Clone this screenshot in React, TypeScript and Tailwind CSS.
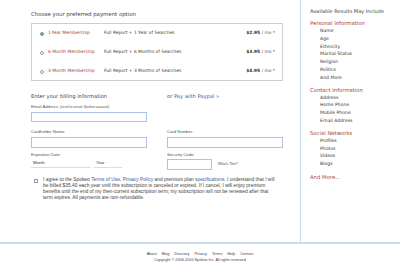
export default function App() {
  const plans = [
    { name: '1-Year Membership', desc: 'Full Report + 1 Year of Searches', price: '$2.95', selected: true },
    { name: '6-Month Membership', desc: 'Full Report + 6 Months of Searches', price: '$3.95', selected: false },
    { name: '3-Month Membership', desc: 'Full Report + 3 Months of Searches', price: '$4.95', selected: false },
  ]

  const sections = [
    { title: 'Personal Information', items: ['Name', 'Age', 'Ethnicity', 'Marital Status', 'Religion', 'Politics', 'And More'] },
    { title: 'Contact Information', items: ['Address', 'Home Phone', 'Mobile Phone', 'Email Address'] },
    { title: 'Social Networks', items: ['Profiles', 'Photos', 'Videos', 'Blogs'] },
  ]

  return (
    <div className="w-[400px] h-[268px] bg-white text-[#333] overflow-hidden" style={{ fontFamily: '"DejaVu Sans", Verdana, sans-serif' }}>
      <div className="flex h-[242px]">
        {/* Main column */}
        <div className="w-[252px] ml-[31px] pt-[10px]">
          <div className="text-[5.4px] leading-[8px] text-[#444]">Choose your preferred payment option</div>

          <div className="mt-[5px] h-[58px] border border-[#cfcfcf]">
            {plans.map((p) => (
              <div key={p.name} className="h-[19px] flex items-center text-[4.4px]">
                <span
                  className={`ml-[8px] w-[4px] h-[4px] rounded-full border-[0.6px] ${p.selected ? 'bg-[#7fb98a] border-[#6a9c78]' : 'bg-white border-[#8a9bb5]'}`}
                />
                <span className="ml-[4px] w-[56px] text-[#b0443a]">{p.name}</span>
                <span className="text-[#444]">{p.desc}</span>
                <span className="ml-auto mr-[7px] text-[#555]">
                  <b className="text-[#333]">{p.price}</b> / mo *
                </span>
              </div>
            ))}
          </div>

          <div className="mt-[11px] flex text-[5.2px] leading-[8px] text-[#444]">
            <span className="w-[136px]">Enter your billing information</span>
            <span>
              or <span className="text-[#3b5ea8]">Pay with Paypal »</span>
            </span>
          </div>

          <div className="text-[4.2px] text-[#555]" style={{ fontFamily: '"Liberation Sans", Arial, sans-serif' }}>
            <div className="mt-[4px] leading-[6px]">
              Email Address: <i className="text-[3.4px]">(used to create Spokeo account)</i>
            </div>
            <div className="mt-[2px] w-[116px] h-[10px] border border-[#a9c4e4]" />

            <div className="mt-[7px] flex gap-[20px]">
              <div className="w-[116px]">
                <div className="leading-[6px]">Cardholder Name:</div>
                <div className="mt-[2px] h-[11px] border border-[#a9c4e4]" />
              </div>
              <div className="w-[116px]">
                <div className="leading-[6px]">Card Number:</div>
                <div className="mt-[2px] h-[11px] border border-[#a9c4e4]" />
              </div>
            </div>

            <div className="mt-[4px] flex gap-[20px]">
              <div className="w-[116px]">
                <div className="leading-[6px]">Expiration Date:</div>
                <div className="mt-[1px] flex gap-[3px]">
                  <div className="w-[60px] h-[9px] pl-[2px] leading-[8px] border-b border-[#ddd] text-[#333]">Month</div>
                  <div className="w-[28px] h-[9px] pl-[2px] leading-[8px] border-b border-[#ddd] text-[#333]">Year</div>
                </div>
              </div>
              <div className="w-[116px]">
                <div className="leading-[6px]">Security Code:</div>
                <div className="mt-[1px] flex items-center">
                  <div className="w-[45px] h-[11px] border border-[#a9c4e4]" />
                  <span className="ml-[6px] text-[3.4px] text-[#444]">What's This?</span>
                </div>
              </div>
            </div>

            <div className="mt-[7px] flex text-[4.9px] leading-[6px] text-[#444]">
              <span className="ml-[3px] mt-[1.5px] w-[4px] h-[4px] border-[0.6px] border-[#8a9bb5] shrink-0" />
              <div className="ml-[5px] w-[240px] whitespace-nowrap">
                <div className="flex">
                  <span>I agree to the Spokeo&nbsp;</span>
                  <span className="text-[#3b5ea8]">Terms of Use</span>
                  <span>,&nbsp;</span>
                  <span className="text-[#3b5ea8]">Privacy Policy</span>
                  <span>&nbsp;and premium plan&nbsp;</span>
                  <span className="text-[#3b5ea8]">specifications</span>
                  <span>. I understand that I will</span>
                </div>
                <div>be billed $35.40 each year until this subscription is canceled or expired. If I cancel, I will enjoy premium</div>
                <div>benefits until the end of my then-current subscription term; my subscription will not be renewed after that</div>
                <div>term expires. All payments are non-refundable.</div>
              </div>
            </div>
          </div>
        </div>

        {/* Sidebar */}
        <div className="ml-[17px] flex-1 border-l border-[#c9d9ec] pl-[9px] pt-[7px] text-[5px]">
          <div className="leading-[8px] text-[#444]">Available Results May Include</div>
          {sections.map((s) => (
            <div key={s.title} className="mt-[4px]">
              <div className="leading-[8px] text-[#a5473d] text-[5.3px]">{s.title}</div>
              {s.items.map((it) => (
                <div key={it} className="pl-[10px] leading-[7.8px] text-[#333] text-[4.6px]">
                  {it}
                </div>
              ))}
            </div>
          ))}
          <div className="mt-[5px] leading-[8px] text-[#a5473d] text-[5.3px]">And More...</div>
        </div>
      </div>

      {/* Footer */}
      <div className="border-t-2 border-[#cddcee] pt-[7px] text-center text-[3.8px] leading-[6px] text-[#444]" style={{ fontFamily: '"Liberation Sans", Arial, sans-serif' }}>
        <div className="flex justify-center gap-[5px]">
          {['About', 'Blog', 'Directory', 'Privacy', 'Terms', 'Help', 'Contact'].map((l) => (
            <span key={l}>{l}</span>
          ))}
        </div>
        <div>Copyright © 2006-2010 Spokeo Inc. All rights reserved</div>
      </div>
    </div>
  )
}
